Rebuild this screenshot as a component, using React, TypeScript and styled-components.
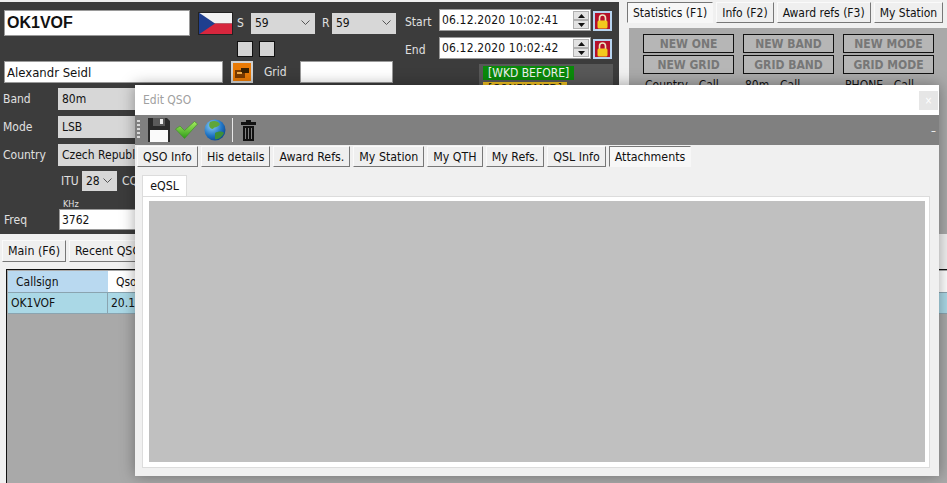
import React from "react";
import styled, { createGlobalStyle } from "styled-components";

const GlobalStyle = createGlobalStyle`
  html, body {
    margin: 0;
    padding: 0;
    height: 100%;
    overflow: hidden;
    background: #f0f0f0;
  }
  body {
    font-family: "DejaVu Sans", "Noto Sans", sans-serif;
    font-stretch: condensed;
    font-size: 12px;
    color: #111;
  }
  #root {
    height: 100%;
  }
`;

const Page = styled.div`
  position: relative;
  width: 947px;
  height: 483px;
  overflow: hidden;
  display: flex;
  flex-direction: column;
`;

const Top = styled.div`
  display: flex;
  height: 234px;
  padding-top: 2px;
  box-sizing: border-box;
`;

const DarkPanel = styled.div`
  width: 619px;
  flex: none;
  background: #3c3c3c;
  display: flex;
  color: #e6e6e6;
  overflow: hidden;
`;

const LeftCol = styled.div`
  width: 400px;
  flex: none;
  padding: 8px 0 0 4px;
  box-sizing: border-box;
  display: flex;
  flex-direction: column;
`;

const MidCol = styled.div`
  flex: 1;
  padding: 7px 0 0 5px;
  display: flex;
  flex-direction: column;
`;

const Row = styled.div<{ $h: number; $gap?: number; $ml?: number; $mb?: number; $mt?: number; $fs?: number }>`
  display: flex;
  align-items: center;
  height: ${(p) => p.$h}px;
  gap: ${(p) => p.$gap ?? 0}px;
  margin-left: ${(p) => p.$ml ?? 0}px;
  margin-bottom: ${(p) => p.$mb ?? 0}px;
  margin-top: ${(p) => p.$mt ?? 0}px;
  font-size: ${(p) => p.$fs ?? 12}px;
`;

const Input = styled.div<{ $w: number; $h: number; $ml?: number }>`
  width: ${(p) => p.$w}px;
  height: ${(p) => p.$h}px;
  margin-left: ${(p) => p.$ml ?? 0}px;
  flex: none;
  box-sizing: border-box;
  background: #fff;
  color: #111;
  border: 1px solid #9a9a9a;
  padding-left: 2px;
  display: flex;
  align-items: center;
`;

const CallInput = styled(Input)`
  font-family: "Liberation Sans", sans-serif;
  font-stretch: normal;
  font-weight: 700;
  font-size: 16px;
`;

const NameInput = styled(Input)`
  font-size: 13px;
`;

const DateText = styled.span`
  letter-spacing: 0.15px;
`;

const Select = styled.div<{ $w: number; $h: number }>`
  width: ${(p) => p.$w}px;
  height: ${(p) => p.$h}px;
  flex: none;
  box-sizing: border-box;
  background: #d7d7d7;
  color: #111;
  padding: 0 5px 0 4px;
  display: flex;
  align-items: center;
  justify-content: space-between;
  white-space: nowrap;
`;

const Label = styled.span<{ $w?: number; $pl?: number; $ml?: number; $down?: number }>`
  flex: none;
  box-sizing: border-box;
  width: ${(p) => (p.$w ? `${p.$w}px` : "auto")};
  padding-left: ${(p) => p.$pl ?? 0}px;
  padding-top: ${(p) => p.$down ?? 0}px;
  margin-left: ${(p) => p.$ml ?? 0}px;
  color: #e0e0e0;
`;

const FlagSlot = styled.div`
  width: 47px;
  flex: none;
  padding-left: 8px;
  box-sizing: border-box;
  display: flex;
`;

const Check = styled.div`
  width: 16px;
  height: 16px;
  box-sizing: border-box;
  background: #d4d4d4;
  border: 1px solid #111;
`;

const OrangeBtn = styled.div`
  width: 22px;
  height: 22px;
  flex: none;
  margin-left: 8px;
  background: #e97a06;
  border: 2px solid #d0d0d0;
  box-sizing: border-box;
  display: flex;
  align-items: center;
  justify-content: center;
`;

const Spin = styled.div`
  width: 16px;
  height: 18px;
  margin-left: auto;
  margin-right: 1px;
  display: flex;
  flex-direction: column;
`;

const SpinHalf = styled.div`
  flex: 1;
  box-sizing: border-box;
  background: #e2e2e2;
  border: 1px solid #b0b0b0;
  display: flex;
  align-items: center;
  justify-content: center;
`;

const LockBtn = styled.div`
  width: 19px;
  height: 20px;
  flex: none;
  align-self: flex-end;
  margin-left: 2px;
  background: #b5102a;
  border: 2px solid #b8d4f0;
  box-sizing: border-box;
  display: flex;
  align-items: center;
  justify-content: center;
`;

const WkdBox = styled.div`
  margin: 5px 0 0 74px;
  width: 134px;
  height: 40px;
  background: #585858;
  padding: 2px 0 0 4px;
  box-sizing: border-box;
`;

const Wkd = styled.div<{ $yellow?: boolean }>`
  height: 14px;
  line-height: 14px;
  padding: 0 5px;
  width: fit-content;
  margin-bottom: 2px;
  color: ${(p) => (p.$yellow ? "#222" : "#f2f2f2")};
  background: ${(p) => (p.$yellow ? "#f0c020" : "#0a8a0a")};
`;

const RightPanel = styled.div`
  flex: 1;
  padding: 0 0 0 8px;
  overflow: hidden;
  display: flex;
  flex-direction: column;
`;

const TabRow = styled.div<{ $h?: number; $fs?: number }>`
  display: flex;
  gap: 3px;
  height: ${(p) => p.$h ?? 22}px;
  flex: none;
  align-items: flex-start;
  white-space: nowrap;
  font-size: ${(p) => p.$fs ?? 12.3}px;
`;

const Tab = styled.div<{ $active?: boolean; $h?: number }>`
  height: ${(p) => p.$h ?? 21}px;
  box-sizing: border-box;
  flex: none;
  padding: 0 5px;
  display: flex;
  align-items: center;
  background: ${(p) => (p.$active ? "#f7f7f7" : "#efefef")};
  border-style: solid;
  border-width: 1px;
  border-color: ${(p) =>
    p.$active ? "#777 #f7f7f7 #f7f7f7 #777" : "#fafafa #777 #777 #fafafa"};
`;

const StatsBox = styled.div`
  margin: 4px 0 0 2px;
  flex: 1;
  background: #a9a9a9;
  padding: 6px 0 0 14px;
  display: grid;
  grid-template-columns: repeat(3, 91px);
  grid-auto-rows: min-content;
  column-gap: 9px;
  row-gap: 2px;
`;

const NewBtn = styled.div`
  box-sizing: border-box;
  height: 19px;
  border: 1px solid #111;
  background: #b6b6b6;
  color: #777;
  font-weight: 700;
  display: flex;
  align-items: center;
  justify-content: center;
  white-space: nowrap;
`;

const StatLabel = styled.div`
  padding: 2px 0 0 2px;
  color: #111;
`;

const Bottom = styled.div`
  flex: 1;
  padding: 6px 0 0 2px;
  display: flex;
  flex-direction: column;
  min-height: 0;
`;

const Table = styled.div`
  margin: 6px 0 0 4px;
  flex: 1;
  border: 1px solid #111;
  border-right: none;
  border-bottom: none;
  background: #a9a9a9;
  padding: 1px 0 0 1px;
`;

const TableHead = styled.div`
  display: flex;
  height: 21px;
  background: #fff;
`;

const HeadCell = styled.div<{ $w?: number; $blue?: boolean }>`
  width: ${(p) => (p.$w ? `${p.$w}px` : "auto")};
  box-sizing: border-box;
  padding-left: 8px;
  display: flex;
  align-items: center;
  background: ${(p) => (p.$blue ? "#b9d9f0" : "#fff")};
`;

const TableRow = styled.div`
  display: flex;
  height: 22px;
  background: #aad8e6;
  border-top: 1px solid #8aa4b0;
  border-bottom: 1px solid #8aa4b0;
  box-sizing: border-box;
`;

const Cell = styled.div<{ $w: number }>`
  width: ${(p) => p.$w}px;
  box-sizing: border-box;
  padding-left: 3px;
  display: flex;
  align-items: center;
  border-right: 1px solid #8aa4b0;
`;

const Dialog = styled.div`
  position: absolute;
  left: 135px;
  top: 85px;
  width: 804px;
  height: 391px;
  background: #f0f0f0;
  box-shadow: 0 0 14px rgba(0, 0, 0, 0.35);
  display: flex;
  flex-direction: column;
`;

const TitleBar = styled.div`
  height: 30px;
  flex: none;
  background: #fff;
  display: flex;
  align-items: center;
  justify-content: space-between;
  padding: 0 1px 0 8px;
  color: #a0a0a0;
`;

const CloseBtn = styled.div`
  width: 19px;
  height: 19px;
  background: #e6e6e6;
  color: #fff;
  display: flex;
  align-items: center;
  justify-content: center;
  font-size: 10px;
`;

const Toolbar = styled.div`
  height: 30px;
  flex: none;
  background: #808080;
  display: flex;
  align-items: center;
  padding-left: 2px;
  color: #fff;
`;

const Grip = styled.div`
  width: 3px;
  height: 20px;
  margin-right: 8px;
  background: repeating-linear-gradient(
    to bottom,
    #d8d8d8 0 2px,
    transparent 2px 4px
  );
`;

const ToolIcon = styled.div<{ $ml: number }>`
  margin-left: ${(p) => p.$ml}px;
  display: flex;
`;

const ToolSep = styled.div`
  width: 1px;
  height: 24px;
  background: #e8e8e8;
  margin-left: 6px;
`;

const Minimize = styled.span`
  margin-left: auto;
  margin-right: 3px;
  font-size: 11px;
`;

const DialogTabs = styled.div`
  padding: 1px 0 0 2px;
`;

const InnerTabs = styled.div`
  margin: 7px 0 0 7px;
  height: 21px;
  display: flex;
`;

const InnerTab = styled.div`
  width: 45px;
  height: 21px;
  box-sizing: border-box;
  background: #fff;
  border: 1px solid #dcdcdc;
  border-bottom: none;
  display: flex;
  align-items: center;
  justify-content: center;
  font-size: 12.3px;
`;

const TabPane = styled.div`
  margin: 0 9px 8px 7px;
  flex: 1;
  background: #fff;
  border: 1px solid #dcdcdc;
  padding: 4px 4px 5px 6px;
  display: flex;
`;

const Attachment = styled.div`
  flex: 1;
  background: #c0c0c0;
`;

const Chevron = () => (
  <svg width="9" height="6" viewBox="0 0 9 6" fill="none" stroke="#555" strokeWidth="1">
    <path d="M0.5 0.5 L4.5 4.5 L8.5 0.5" />
  </svg>
);

const Arrow = ({ down }: { down?: boolean }) => (
  <svg width="7" height="4" viewBox="0 0 7 4">
    <path d={down ? "M0 0H7L3.5 4Z" : "M0 4H7L3.5 0Z"} fill="#111" />
  </svg>
);

const Lock = () => (
  <svg width="11" height="15" viewBox="0 0 11 15">
    <path d="M2.5 7V4a3 3 0 0 1 6 0v3" fill="none" stroke="#ece5c0" strokeWidth="1.6" />
    <rect x="0.5" y="6.5" width="10" height="8" rx="1.5" fill="#f3c81e" />
  </svg>
);

const Card = () => (
  <svg width="14" height="11" viewBox="0 0 14 11">
    <rect x="0" y="3" width="10" height="8" fill="#7a3a00" />
    <rect x="6" y="1" width="8" height="5" fill="#3a2000" />
    <rect x="2" y="5" width="5" height="2" fill="#f5b04a" />
  </svg>
);

const CzechFlag = () => (
  <svg width="35" height="23" viewBox="0 0 35 23">
    <rect width="35" height="11.5" fill="#f2f2f2" />
    <rect y="11.5" width="35" height="11.5" fill="#d7263d" />
    <path d="M0 0 L17 11.5 L0 23 Z" fill="#1f3f8f" />
    <rect x="0.5" y="0.5" width="34" height="22" fill="none" stroke="#222" />
  </svg>
);

const Floppy = () => (
  <svg width="22" height="24" viewBox="0 0 22 24">
    <path d="M0 0H19L22 3V24H0Z" fill="#2a2a2a" />
    <rect x="2" y="12" width="18" height="12" fill="#fafafa" />
    <rect x="5" y="0" width="12" height="8" fill="#5a5a5a" />
    <rect x="12" y="1" width="3" height="5" fill="#ececec" />
  </svg>
);

const GreenCheck = () => (
  <svg width="23" height="18" viewBox="0 0 23 18">
    <defs>
      <linearGradient id="chk" x1="0" y1="0" x2="0" y2="1">
        <stop offset="0" stopColor="#a5ec5e" />
        <stop offset="1" stopColor="#2f9c1a" />
      </linearGradient>
    </defs>
    <path d="M0.5 8 L5 5 L9.5 9.5 L19.5 0.5 L22.5 3 L9.5 17.5 Z" fill="url(#chk)" stroke="#3b8f22" strokeWidth="0.6" />
  </svg>
);

const Globe = () => (
  <svg width="22" height="22" viewBox="0 0 22 22">
    <defs>
      <radialGradient id="sea" cx="0.35" cy="0.3" r="0.8">
        <stop offset="0" stopColor="#8ccdf5" />
        <stop offset="0.6" stopColor="#1f74c4" />
        <stop offset="1" stopColor="#0c3f86" />
      </radialGradient>
    </defs>
    <circle cx="11" cy="11" r="10.5" fill="url(#sea)" />
    <path d="M6 3 C10 1 14 2 16 5 C14 9 11 7 9 10 C6 10 4 7 6 3Z" fill="#5fa63a" />
    <path d="M11 14 C14 12 19 12 20 14 C18 18 14 21 11 20Z" fill="#3d8f3a" />
  </svg>
);

const Trash = () => (
  <svg width="15" height="21" viewBox="0 0 15 21">
    <rect x="5" y="0" width="5" height="2" fill="#111" />
    <rect x="0" y="2" width="15" height="3" fill="#111" />
    <path d="M2 6H13V21H2Z" fill="#111" />
    <path d="M4.5 8V19M7.5 8V19M10.5 8V19" stroke="#808080" strokeWidth="1" />
  </svg>
);

const DateField = ({ value }: { value: string }) => (
  <Input $w={152} $h={22}>
    <DateText>{value}</DateText>
    <Spin>
      <SpinHalf>
        <Arrow />
      </SpinHalf>
      <SpinHalf>
        <Arrow down />
      </SpinHalf>
    </Spin>
  </Input>
);

const stats = [
  "NEW ONE",
  "NEW BAND",
  "NEW MODE",
  "NEW GRID",
  "GRID BAND",
  "GRID MODE",
];

const dialogTabs = [
  "QSO Info",
  "His details",
  "Award Refs.",
  "My Station",
  "My QTH",
  "My Refs.",
  "QSL Info",
];

export default function App() {
  return (
    <Page>
      <GlobalStyle />
      <Top>
        <DarkPanel>
          <LeftCol>
            <Row $h={26} $mb={5}>
              <CallInput $w={186} $h={26}>OK1VOF</CallInput>
              <FlagSlot>
                <CzechFlag />
              </FlagSlot>
              <Label $w={14}>S</Label>
              <Select $w={64} $h={21}>
                59 <Chevron />
              </Select>
              <Label $w={17} $pl={7}>R</Label>
              <Select $w={64} $h={21}>
                59 <Chevron />
              </Select>
            </Row>
            <Row $h={16} $gap={6} $ml={233} $mb={4}>
              <Check />
              <Check />
            </Row>
            <Row $h={22} $mb={5}>
              <NameInput $w={219} $h={22}>Alexandr Seidl</NameInput>
              <OrangeBtn>
                <Card />
              </OrangeBtn>
              <Label $w={47} $pl={11}>Grid</Label>
              <Input $w={93} $h={22} />
            </Row>
            <Row $h={22} $mb={6} $ml={-1}>
              <Label $w={55}>Band</Label>
              <Select $w={120} $h={22}>80m</Select>
            </Row>
            <Row $h={22} $mb={6} $ml={-1}>
              <Label $w={55}>Mode</Label>
              <Select $w={120} $h={22}>LSB</Select>
            </Row>
            <Row $h={22} $mb={5} $ml={-1}>
              <Label $w={55}>Country</Label>
              <Select $w={120} $h={22}>Czech Republic</Select>
            </Row>
            <Row $h={20} $ml={57}>
              <Label $w={21}>ITU</Label>
              <Select $w={35} $h={20}>
                28 <Chevron />
              </Select>
              <Label $ml={5}>CQ</Label>
            </Row>
            <Row $h={11} $ml={59} $mt={7} $fs={9}>
              <Label>KHz</Label>
            </Row>
            <Row $h={21}>
              <Label $w={55}>Freq</Label>
              <Input $w={120} $h={21}>3762</Input>
            </Row>
          </LeftCol>
          <MidCol>
            <Row $h={22} $mb={6}>
              <Label $w={34} $down={4}>Start</Label>
              <DateField value="06.12.2020 10:02:41" />
              <LockBtn>
                <Lock />
              </LockBtn>
            </Row>
            <Row $h={22}>
              <Label $w={34} $down={4}>End</Label>
              <DateField value="06.12.2020 10:02:42" />
              <LockBtn>
                <Lock />
              </LockBtn>
            </Row>
            <WkdBox>
              <Wkd>[WKD BEFORE]</Wkd>
              <Wkd $yellow>[CONFIRMED]</Wkd>
            </WkdBox>
          </MidCol>
        </DarkPanel>
        <RightPanel>
          <TabRow $fs={12}>
            <Tab $active>Statistics (F1)</Tab>
            <Tab>Info (F2)</Tab>
            <Tab>Award refs (F3)</Tab>
            <Tab>My Station</Tab>
          </TabRow>
          <StatsBox>
            {stats.map((s) => (
              <NewBtn key={s}>{s}</NewBtn>
            ))}
            <StatLabel>Country - Call</StatLabel>
            <StatLabel>80m - Call</StatLabel>
            <StatLabel>PHONE - Call</StatLabel>
          </StatsBox>
        </RightPanel>
      </Top>
      <Bottom>
        <TabRow $h={23}>
          <Tab $h={22}>Main (F6)</Tab>
          <Tab $h={22}>Recent QSOs</Tab>
        </TabRow>
        <Table>
          <TableHead>
            <HeadCell $w={100} $blue>Callsign</HeadCell>
            <HeadCell>Qso date</HeadCell>
          </TableHead>
          <TableRow>
            <Cell $w={100}>OK1VOF</Cell>
            <Cell $w={120}>20.12.2020</Cell>
          </TableRow>
        </Table>
      </Bottom>
      <Dialog>
        <TitleBar>
          Edit QSO
          <CloseBtn>×</CloseBtn>
        </TitleBar>
        <Toolbar>
          <Grip />
          <Floppy />
          <ToolIcon $ml={5}>
            <GreenCheck />
          </ToolIcon>
          <ToolIcon $ml={6}>
            <Globe />
          </ToolIcon>
          <ToolSep />
          <ToolIcon $ml={8}>
            <Trash />
          </ToolIcon>
          <Minimize>–</Minimize>
        </Toolbar>
        <DialogTabs>
          <TabRow>
            {dialogTabs.map((t) => (
              <Tab key={t}>{t}</Tab>
            ))}
            <Tab $active>Attachments</Tab>
          </TabRow>
        </DialogTabs>
        <InnerTabs>
          <InnerTab>eQSL</InnerTab>
        </InnerTabs>
        <TabPane>
          <Attachment />
        </TabPane>
      </Dialog>
    </Page>
  );
}
